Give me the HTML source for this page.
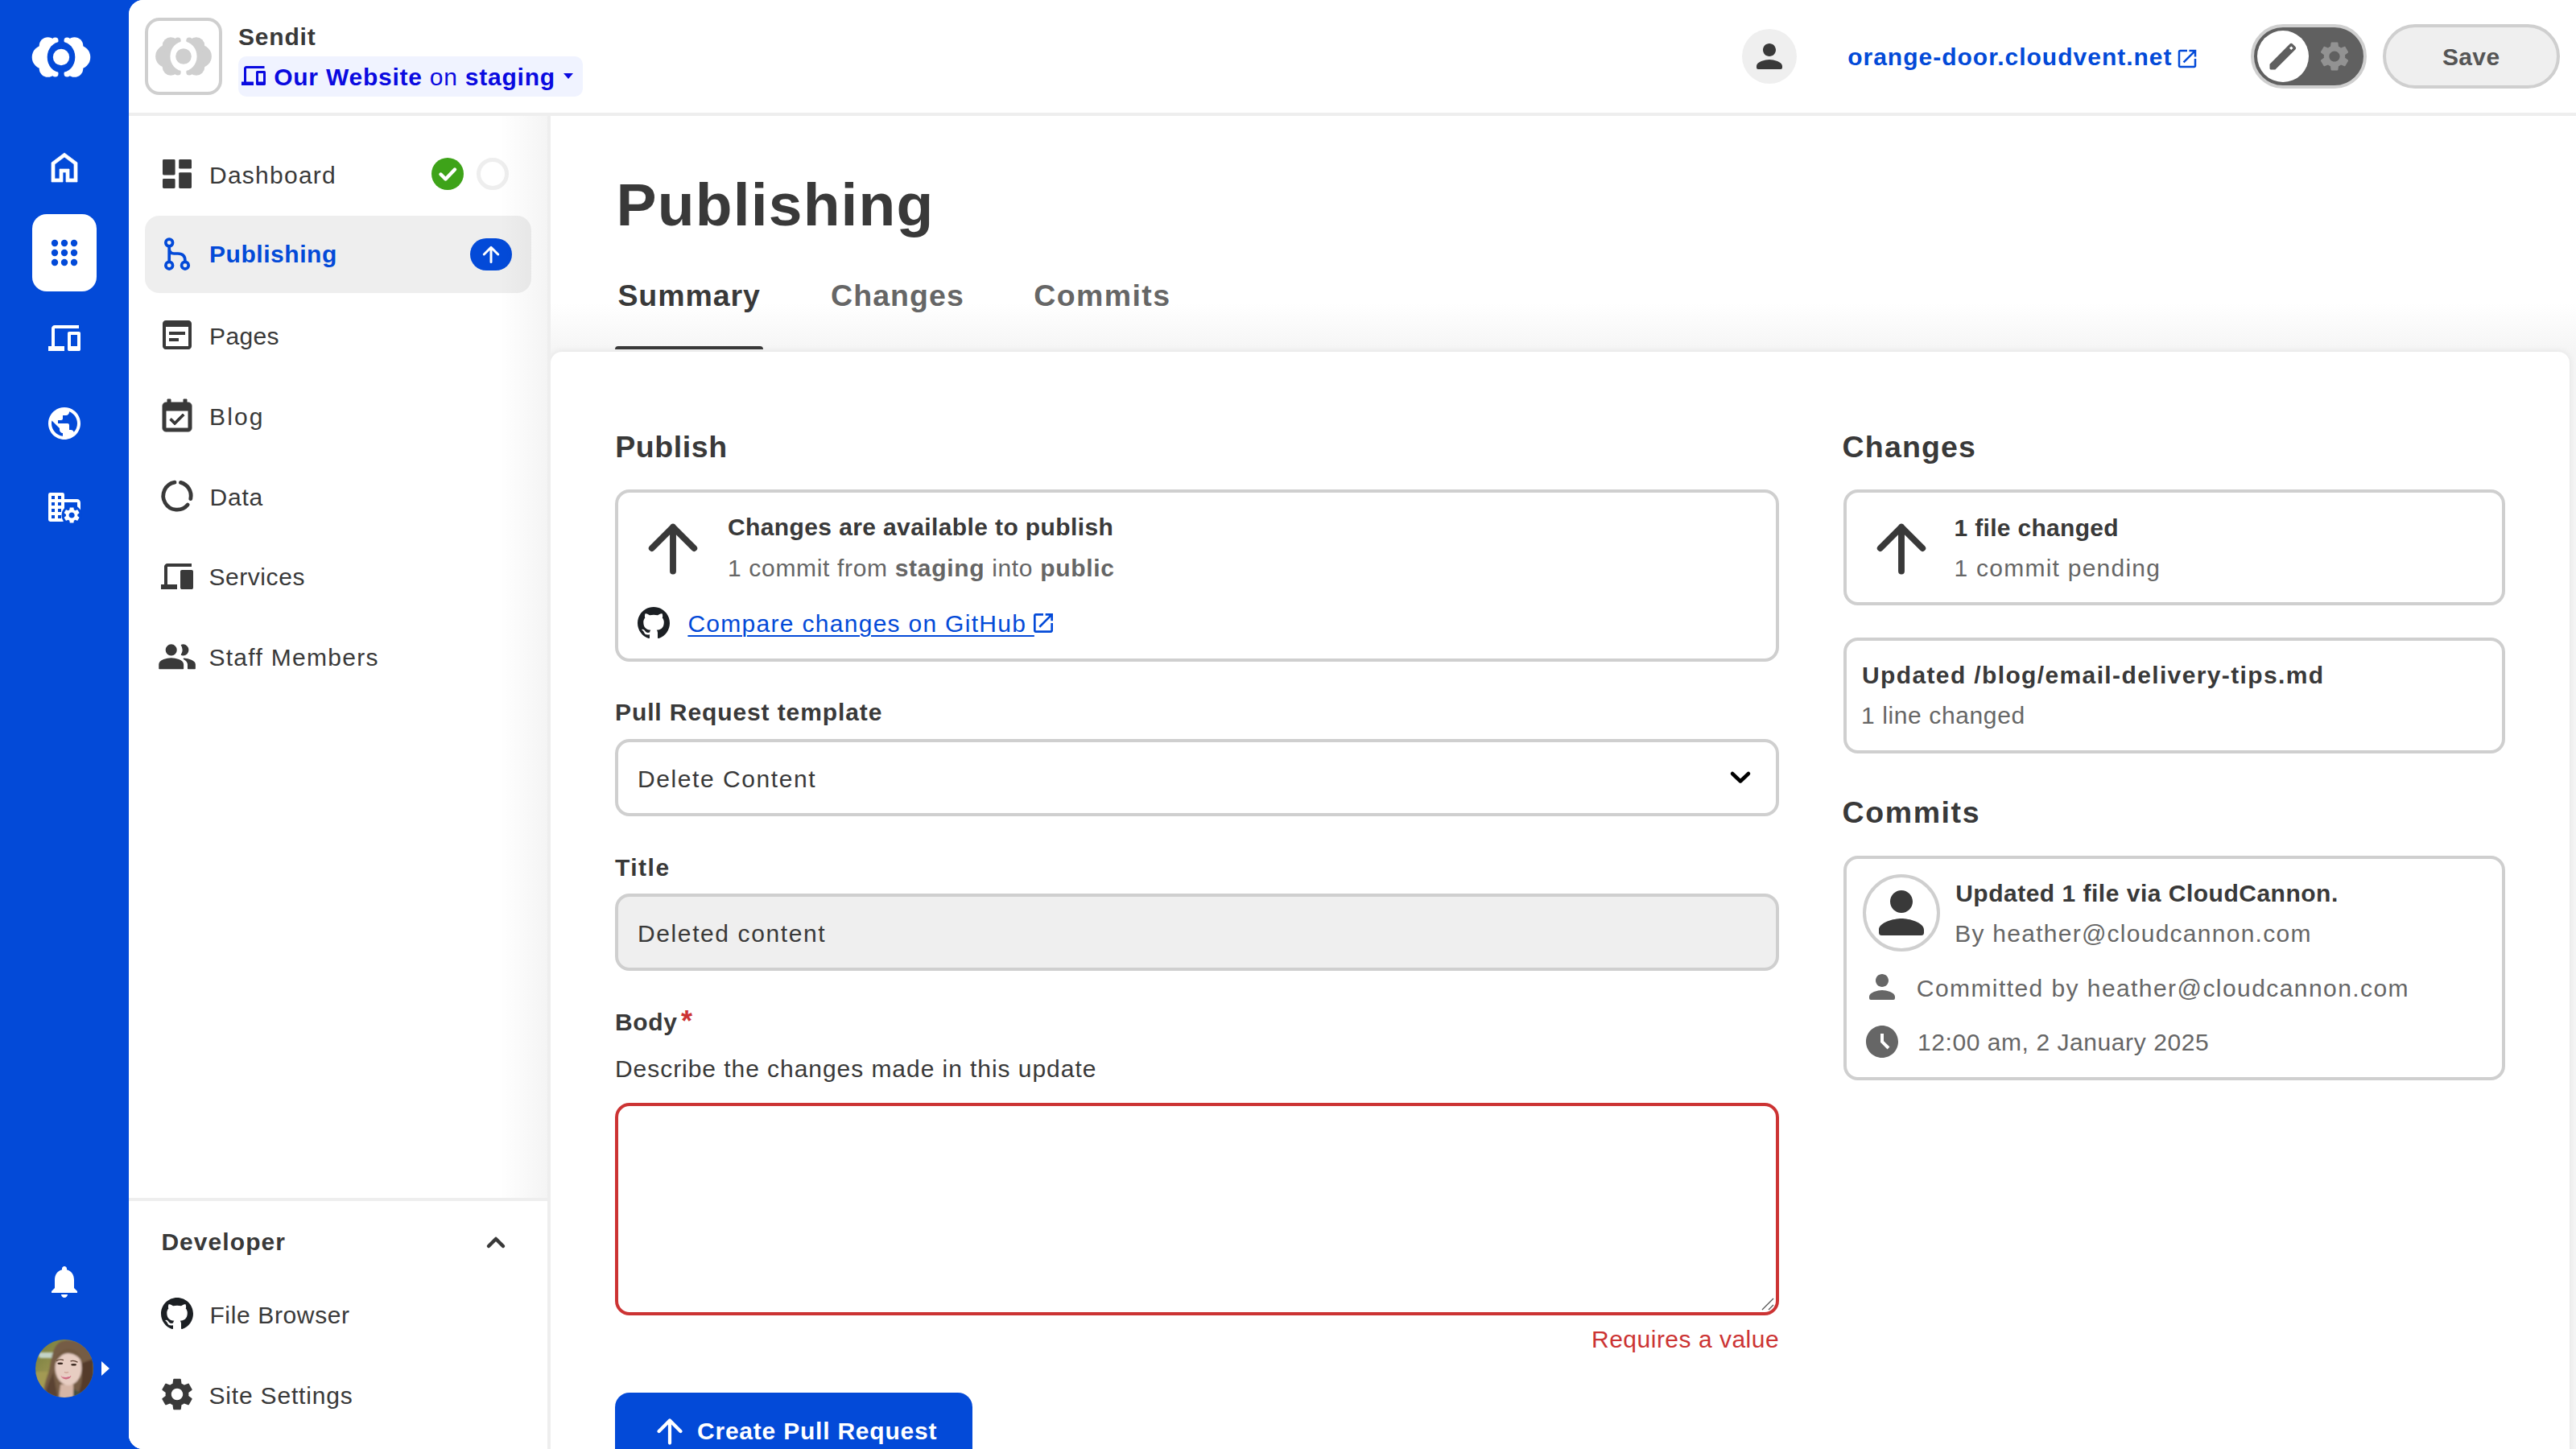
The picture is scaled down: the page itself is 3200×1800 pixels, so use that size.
<!DOCTYPE html>
<html lang="en">
<head>
<meta charset="utf-8">
<title>Publishing - Sendit - CloudCannon</title>
<style>
*{box-sizing:border-box;margin:0;padding:0}
html,body{width:3200px;height:1800px;overflow:hidden}
body{background:#034ad8;font-family:"Liberation Sans",sans-serif;color:#393939;position:relative;font-size:30px}
.abs{position:absolute}
.t{position:absolute;white-space:nowrap;line-height:1;display:block}
svg{position:absolute;display:block;overflow:visible}
#rail{position:absolute;left:0;top:0;width:160px;height:1800px;background:#034ad8}
#main{position:absolute;left:160px;top:0;width:3040px;height:1800px;background:#fff;border-radius:18px 0 0 18px;overflow:hidden}
#hdr{position:absolute;left:0;top:0;width:3040px;height:144px;border-bottom:4px solid #eee;background:#fff}
#nav{position:absolute;left:0;top:144px;width:524px;height:1656px;background:#fff;border-right:4px solid #eee}
#navshade{position:absolute;left:620px;top:144px;width:60px;height:1344px;pointer-events:none;background:linear-gradient(90deg,rgba(0,0,0,0),rgba(0,0,0,.045))}
#dev{position:absolute;left:0;top:1344px;width:520px;height:312px;background:#fff;border-top:4px solid #eee}
#content{position:absolute;left:524px;top:144px;width:2516px;height:1656px;background:linear-gradient(180deg,#fff 0,#fff 232px,#f5f5f5 293px)}
#card{position:absolute;left:0;top:293px;width:2508px;height:1400px;background:#fff;border-radius:14px 14px 0 0;box-shadow:0 0 10px rgba(0,0,0,.09)}
.box{position:absolute;border:4px solid #cfcfcf;border-radius:18px;background:#fff}
</style>
</head>
<body>
<div id="rail"></div>
<div id="main">
  <div id="content"><div id="card"></div></div>
  <div id="nav"><div id="dev"></div></div>
  <div id="hdr"></div>
</div>

<nav id="railitems" class="abs" style="left:0;top:0">
<svg style="left:76px;top:71px" width="1" height="1" fill="#fff"><g>
<mask id="m1" maskUnits="userSpaceOnUse" x="-40" y="-30" width="80" height="60">
<rect x="-40" y="-30" width="80" height="60" fill="#fff"/>
<ellipse cx="0" cy="0" rx="17.300" ry="19.300" fill="#000"/>
<rect x="-3.200" y="-30" width="6.400" height="60" fill="#000"/>
</mask>
<g mask="url(#m1)">
<circle cx="-21.5" cy="0" r="14.8"/><circle cx="21.5" cy="0" r="14.8"/>
<circle cx="-16.5" cy="-14" r="10.8"/><circle cx="16.5" cy="-14" r="10.8"/>
<circle cx="-16.5" cy="14" r="10.8"/><circle cx="16.5" cy="14" r="10.8"/>
<circle cx="-7.4" cy="-20.600" r="4"/><circle cx="7.4" cy="-20.600" r="4"/>
<circle cx="-7.4" cy="20.600" r="4"/><circle cx="7.4" cy="20.600" r="4"/>
<circle cx="-10" cy="-12" r="9"/><circle cx="10" cy="-12" r="9"/><circle cx="-10" cy="12" r="9"/><circle cx="10" cy="12" r="9"/>
</g>
<circle cx="0" cy="0" r="10.2"/>
</g></svg>
<svg style="left:56px;top:184px" width="48" height="48" viewBox="0 0 24 24" fill="#fff" ><path d="M6 19h3v-6h6v6h3v-9l-6-4.5L6 10Zm-2 2V9l8-6 8 6v12h-7v-6h-2v6Z" stroke="#fff" stroke-width=".35" stroke-linejoin="round"/></svg>
<div class="abs" style="left:40px;top:266px;width:80px;height:96px;background:#fff;border-radius:18px"></div>
<svg style="left:56px;top:290px" width="48" height="48" viewBox="0 0 24 24" fill="#034ad8" ><circle cx="6" cy="6" r="2.1"/><circle cx="12" cy="6" r="2.1"/><circle cx="18" cy="6" r="2.1"/><circle cx="6" cy="12" r="2.1"/><circle cx="12" cy="12" r="2.1"/><circle cx="18" cy="12" r="2.1"/><circle cx="6" cy="18" r="2.1"/><circle cx="12" cy="18" r="2.1"/><circle cx="18" cy="18" r="2.1"/></svg>
<svg style="left:56px;top:396px" width="48" height="48" viewBox="0 0 24 24" fill="#fff" ><path d="M2 20v-3h2V6q0-.825.588-1.412Q5.175 4 6 4h15v2H6v11h6v3Zm13 0q-.425 0-.712-.288Q14 19.425 14 19V9q0-.425.288-.713Q14.575 8 15 8h6q.425 0 .713.287Q22 8.575 22 9v10q0 .425-.287.712Q21.425 20 21 20Zm1-3h4v-7h-4Z"/></svg>
<svg style="left:56px;top:502px" width="48" height="48" viewBox="0 0 24 24" fill="#fff" ><path d="M12 2C6.48 2 2 6.48 2 12s4.48 10 10 10 10-4.48 10-10S17.52 2 12 2zm-1 17.93c-3.95-.49-7-3.85-7-7.93 0-.62.08-1.21.21-1.79L9 15v1c0 1.1.9 2 2 2v1.930zm6.9-2.54c-.26-.81-1-1.39-1.9-1.39h-1v-3c0-.55-.45-1-1-1H8v-2h2c.55 0 1-.45 1-1V7h2c1.1 0 2-.9 2-2v-.41c2.93 1.19 5 4.06 5 7.41 0 2.08-.8 3.97-2.1 5.39z"/></svg>
<svg style="left:56px;top:606px" width="48" height="48" viewBox="0 0 24 24" fill="#fff" ><path fill-rule="evenodd" d="M3.200 3h7.600a1.200 1.200 0 0 1 1.200 1.200v15.600a1.200 1.200 0 0 1-1.200 1.200H3.200a1.200 1.200 0 0 1-1.200-1.200V4.200A1.200 1.200 0 0 1 3.200 3zM4 5h2v2H4zM8 5h2v2H8zM4 9h2v2H4zM8 9h2v2H8zM4 13h2v2H4zM8 13h2v2H8zM4 17h2v2H4zM8 17h2v2H8z"/><path d="M12 7h7.800a2.200 2.200 0 0 1 2.200 2.200V14h-2V9h-8z"/><circle cx="16.550" cy="17" r="6.300" fill="#034ad8"/><path transform="translate(10.550 11) scale(0.5)" d="M19.14 12.94c.04-.3.06-.61.06-.94 0-.32-.02-.64-.07-.94l2.03-1.58c.18-.14.23-.41.12-.61l-1.92-3.32c-.12-.22-.37-.29-.59-.22l-2.39.96c-.5-.38-1.03-.7-1.62-.94l-.36-2.54c-.04-.24-.24-.41-.48-.41h-3.84c-.24 0-.43.17-.47.41l-.36 2.54c-.59.24-1.13.57-1.62.94l-2.39-.96c-.22-.08-.47 0-.59.22L2.74 8.870c-.12.21-.08.47.12.61l2.03 1.58c-.05.3-.09.63-.09.94s.02.64.07.94l-2.03 1.58c-.18.14-.23.41-.12.61l1.920 3.320c.12.22.37.29.59.22l2.39-.96c.5.38 1.03.7 1.62.94l.36 2.54c.05.24.24.41.48.41h3.84c.24 0 .44-.17.47-.41l.36-2.54c.59-.24 1.13-.56 1.62-.94l2.39.96c.22.08.47 0 .59-.22l1.92-3.32c.12-.22.07-.47-.12-.61l-2.010-1.58zM12 15.600c-1.98 0-3.600-1.62-3.600-3.600s1.62-3.600 3.600-3.600 3.600 1.62 3.600 3.600-1.62 3.600-3.600 3.600z"/></svg>
<svg style="left:56px;top:1568px" width="48" height="48" viewBox="0 0 24 24" fill="#fff" ><path d="M12 22c1.1 0 2-.9 2-2h-4c0 1.1.89 2 2 2zm6-6v-5c0-3.07-1.64-5.64-4.5-6.32V4c0-.83-.67-1.5-1.5-1.5s-1.5.67-1.5 1.5v.68C7.63 5.36 6 7.92 6 11v5l-2 2v1h16v-1l-2-2z"/></svg>
<svg id="avatar" style="left:44px;top:1664px" width="72" height="72" viewBox="0 0 72 72">
<defs><clipPath id="avc"><circle cx="36" cy="36" r="36"/></clipPath>
<linearGradient id="avbg" x1="0" y1="0" x2="1" y2="1"><stop offset="0" stop-color="#6f7a3c"/><stop offset=".45" stop-color="#9c9552"/><stop offset="1" stop-color="#8a7a48"/></linearGradient>
<filter id="avb" x="-10%" y="-10%" width="120%" height="120%"><feGaussianBlur stdDeviation="1.1"/></filter>
<filter id="avb2" x="-10%" y="-10%" width="120%" height="120%"><feGaussianBlur stdDeviation=".6"/></filter></defs>
<g clip-path="url(#avc)">
<rect width="72" height="72" fill="url(#avbg)"/>
<g filter="url(#avb)">
<rect x="4" y="16" width="22" height="7" rx="3" fill="#c3d3c6"/>
<rect x="0" y="40" width="16" height="32" fill="#a39a52"/>
<path d="M38 1C22 2 21 20 18 34 15 48 9 56 10 74h62V20C66 6 54 0 38 1z" fill="#755c45"/>
<path d="M56 30c4 12 2 30-6 44h22V24z" fill="#553b2b"/>
<path d="M22 40c-3 10-9 18-10 34h16c-2-10-4-22-6-34z" fill="#5a4230"/>
<path d="M48 62l8 4 6 8H44z" fill="#46503f"/>
<path d="M31 56h16v18H29z" fill="#d6b6a6"/>
<ellipse cx="41" cy="35" rx="16.500" ry="22" fill="#e7cdc2"/>
<path d="M23.500 34C25 19 32 11.500 41 11.500c9.500 0 16 6 18.500 19-4-8-10-13-18.500-13.500-8 0-14 6-17.500 17z" fill="#715841"/>
</g>
<g filter="url(#avb2)">
<ellipse cx="30.800" cy="29.800" rx="3.400" ry="1.300" fill="#3b2a22"/><ellipse cx="47.600" cy="31.300" rx="3.400" ry="1.300" fill="#3b2a22"/>
<path d="M26 26.500q4.500-2.600 9-.8M43.500 26.800q4.500-1.500 9 1.500" stroke="#5b3f30" stroke-width="1.300" fill="none"/>
<path d="M36 40.500q2.500 1.200 5 0" stroke="#c79a8c" stroke-width="1.200" fill="none"/>
<path d="M31.500 45.300q6.500 1.800 13-.3-1.500 4.200-6.500 4.400Q33.500 49.200 31.500 45.300z" fill="#cf6f84"/>
<path d="M32.500 45.800q5.500 1.300 10.500-.6" stroke="#f1dcd6" stroke-width="1" fill="none"/>
</g></g></svg>
<svg style="left:126px;top:1691px" width="10" height="18" viewBox="0 0 10 18" fill="#fff"><path d="M0 0l10 9L0 18z"/></svg>
</nav>

<header id="hdritems" class="abs" style="left:0;top:0">
<div class="abs" style="left:180px;top:22px;width:96px;height:96px;border:4px solid #cfcfcf;border-radius:18px;background:#fff"></div>
<svg style="left:228px;top:70px" width="1" height="1" fill="#cfcfcf"><g transform="scale(.96)"><g>
<mask id="m2" maskUnits="userSpaceOnUse" x="-40" y="-30" width="80" height="60">
<rect x="-40" y="-30" width="80" height="60" fill="#fff"/>
<ellipse cx="0" cy="0" rx="17.300" ry="19.300" fill="#000"/>
<rect x="-3.200" y="-30" width="6.400" height="60" fill="#000"/>
</mask>
<g mask="url(#m2)">
<circle cx="-21.5" cy="0" r="14.8"/><circle cx="21.5" cy="0" r="14.8"/>
<circle cx="-16.5" cy="-14" r="10.8"/><circle cx="16.5" cy="-14" r="10.8"/>
<circle cx="-16.5" cy="14" r="10.8"/><circle cx="16.5" cy="14" r="10.8"/>
<circle cx="-7.4" cy="-20.600" r="4"/><circle cx="7.4" cy="-20.600" r="4"/>
<circle cx="-7.4" cy="20.600" r="4"/><circle cx="7.4" cy="20.600" r="4"/>
<circle cx="-10" cy="-12" r="9"/><circle cx="10" cy="-12" r="9"/><circle cx="-10" cy="12" r="9"/><circle cx="10" cy="12" r="9"/>
</g>
<circle cx="0" cy="0" r="10.2"/>
</g></g></svg>
<div id="t_sendit" class="t" style="left:296.00px;top:31.40px;font-size:30px;letter-spacing:0.800px;color:#393939;font-weight:bold">Sendit</div>
<div class="abs" style="left:296px;top:70px;width:428px;height:50px;border-radius:10px;background:#f0f3ff"></div>
<svg style="left:297px;top:76px" width="36" height="36" viewBox="0 0 24 24" fill="#0a0ae0" ><path d="M2 20v-3h2V6q0-.825.588-1.412Q5.175 4 6 4h15v2H6v11h6v3Zm13 0q-.425 0-.712-.288Q14 19.425 14 19V9q0-.425.288-.713Q14.575 8 15 8h6q.425 0 .713.287Q22 8.575 22 9v10q0 .425-.287.712Q21.425 20 21 20Zm1-3h4v-7h-4Z"/></svg>
<div id="t_site" class="t" style="left:340.20px;top:81.00px;font-size:30px;letter-spacing:0.762px;color:#0a0ae0;font-weight:normal"><b>Our Website</b> on <b>staging</b></div>
<svg style="left:700px;top:91px" width="12" height="7" viewBox="0 0 12 7" fill="#0a0ae0"><path d="M0 0h12L6 7z"/></svg>
<div class="abs" style="left:2164px;top:36px;width:68px;height:68px;border-radius:50%;background:#efefef"></div>
<svg style="left:2174px;top:46px" width="48" height="48" viewBox="0 0 24 24" fill="#393939" ><path d="M12 12c2.21 0 4-1.79 4-4s-1.79-4-4-4-4 1.79-4 4 1.79 4 4 4zm0 2c-2.67 0-8 1.340-8 4v1q0 1 1 1h14q1 0 1-1v-1c0-2.660-5.330-4-8-4z"/></svg>
<a id="t_url" class="t" style="left:2295.20px;top:55.60px;font-size:30px;letter-spacing:1.000px;color:#034ad8;font-weight:bold">orange-door.cloudvent.net</a>
<svg style="left:2702px;top:58px" width="30" height="30" viewBox="0 0 24 24" fill="#034ad8" ><path d="M19 19H5V5h7V3H5c-1.11 0-2 .9-2 2v14c0 1.1.89 2 2 2h14c1.100 0 2-.9 2-2v-7h-2v7zM14 3v2h3.590l-9.830 9.830 1.410 1.410L19 6.410V10h2V3h-7z"/></svg>
<div class="abs" style="left:2796px;top:30px;width:144px;height:80px;border-radius:40px;border:4px solid #cfcfcf;background:#606060"></div>
<div class="abs" style="left:2804px;top:38px;width:64px;height:64px;border-radius:50%;background:#fff"></div>
<svg style="left:2814px;top:48px" width="44" height="44" viewBox="0 0 24 24" fill="#5f5f5f" ><path fill-rule="evenodd" d="M3 17.250V20.200q0 .8.800.8h2.950L20.400 7.350a1.300 1.300 0 0 0 0-1.840L18.490 3.600a1.300 1.300 0 0 0-1.840 0ZM17.600 5.150l1.250 1.250-1.250 1.250-1.250-1.250z"/></svg>
<svg style="left:2878px;top:48px" width="44" height="44" viewBox="0 0 24 24" fill="#929292" ><path d="M19.14 12.94c.04-.3.06-.61.06-.94 0-.32-.02-.64-.07-.94l2.03-1.58c.18-.14.23-.41.12-.61l-1.92-3.32c-.12-.22-.37-.29-.59-.22l-2.39.96c-.5-.38-1.03-.7-1.62-.94l-.36-2.54c-.04-.24-.24-.41-.48-.41h-3.84c-.24 0-.43.17-.47.41l-.36 2.54c-.59.24-1.13.57-1.62.94l-2.39-.96c-.22-.08-.47 0-.59.22L2.74 8.870c-.12.21-.08.47.12.61l2.03 1.58c-.05.3-.09.63-.09.94s.02.64.07.94l-2.03 1.58c-.18.14-.23.41-.12.61l1.920 3.320c.12.22.37.29.59.22l2.39-.96c.5.38 1.03.7 1.62.94l.36 2.54c.05.24.24.41.48.41h3.84c.24 0 .44-.17.47-.41l.36-2.54c.59-.24 1.13-.56 1.62-.94l2.39.96c.22.08.47 0 .59-.22l1.92-3.32c.12-.22.07-.47-.12-.61l-2.010-1.58zM12 15.600c-1.98 0-3.600-1.62-3.600-3.600s1.62-3.600 3.600-3.600 3.600 1.62 3.600 3.600-1.62 3.600-3.600 3.600z"/></svg>
<div class="abs" style="left:2960px;top:30px;width:220px;height:80px;border-radius:40px;border:4px solid #cfcfcf;background:#efefef"></div>
<span id="t_save" class="t" style="left:3034.00px;top:55.60px;font-size:30px;letter-spacing:0.333px;color:#555;font-weight:bold">Save</span>
</header>

<nav id="navitems" class="abs" style="left:0;top:0">
<svg style="left:196px;top:192px" width="48" height="48" viewBox="0 0 24 24" fill="#393939" ><rect x="3" y="3" width="7.800" height="9.700" rx=".7"/><rect x="3" y="15" width="7.800" height="6" rx=".7"/><rect x="13.100" y="3" width="7.900" height="5.800" rx=".7"/><rect x="13.100" y="11.100" width="7.900" height="9.900" rx=".7"/></svg><div id="t_n_dash" class="t" style="left:260.00px;top:202.60px;font-size:30px;letter-spacing:1.250px;color:#393939;font-weight:normal">Dashboard</div>
<svg style="left:536px;top:196px" width="40" height="40" viewBox="0 0 40 40"><circle cx="20" cy="20" r="20" fill="#3ea319"/><path d="M11.500 20.500l6 6L29 14.500" fill="none" stroke="#fff" stroke-width="4.400" stroke-linecap="round" stroke-linejoin="round"/></svg>
<div class="abs" style="left:592px;top:196px;width:40px;height:40px;border-radius:50%;border:5px solid #eee;background:#fff"></div>
<div class="abs" style="left:180px;top:268px;width:480px;height:96px;border-radius:18px;background:#eee"></div>
<svg style="left:196px;top:292px" width="48" height="48" viewBox="0 0 24 24" fill="none" stroke="#034ad8" stroke-width="1.850" stroke-linecap="round"><circle cx="7.100" cy="4.750" r="2.170"/><circle cx="7.100" cy="18.850" r="2.170"/><circle cx="16.950" cy="18.850" r="2.170"/><path d="M7.100 7v9.600M7.100 8.500q0 3 3 3h2.400q4.450 0 4.450 4.450v.65"/></svg>
<div id="t_n_pub" class="t" style="left:260.00px;top:301.00px;font-size:30px;letter-spacing:0.556px;color:#034ad8;font-weight:bold">Publishing</div>
<div class="abs" style="left:584px;top:296px;width:52px;height:40px;border-radius:20px;background:#034ad8"></div>
<svg style="left:595px;top:301px" width="30" height="30" viewBox="0 0 24 24" fill="none" stroke="#fff" stroke-width="2.4" stroke-linecap="round" stroke-linejoin="round"><path d="M12 19.600V5M5 12l7-7 7 7"/></svg>
<svg style="left:196px;top:392px" width="48" height="48" viewBox="0 0 24 24" fill="#393939" ><path d="M19 3H5c-1.110 0-2 .9-2 2v14c0 1.100.890 2 2 2h14c1.100 0 2-.9 2-2V5c0-1.100-.890-2-2-2zm0 16H5V7h14v12zm-2-7H7v-2h10v2zm-4 4H7v-2h6v2z"/></svg><div id="t_n_pages" class="t" style="left:260.00px;top:402.60px;font-size:30px;letter-spacing:0.375px;color:#393939;font-weight:normal">Pages</div>
<svg style="left:196px;top:494px" width="48" height="48" viewBox="0 0 24 24" fill="#393939" ><path stroke="#393939" stroke-width=".5" stroke-linejoin="round" d="M16.53 11.060L15.470 10l-4.880 4.880-2.120-2.120-1.060 1.060L10.590 17l5.940-5.940zM19 3h-1V1h-2v2H8V1H6v2H5c-1.110 0-1.990.9-1.990 2L3 19c0 1.100.890 2 2 2h14c1.100 0 2-.9 2-2V5c0-1.100-.9-2-2-2zm0 16H5V8h14v11z"/></svg><div id="t_n_blog" class="t" style="left:260.00px;top:502.60px;font-size:30px;letter-spacing:2.167px;color:#393939;font-weight:normal">Blog</div>
<svg style="left:196px;top:592px" width="48" height="48" viewBox="0 0 24 24" fill="#393939" ><path d="M10.510 3.530A8.600 8.600 0 1 0 18.590 17.530M14.230 3.690A8.600 8.600 0 0 1 20.410 13.790" fill="none" stroke="#393939" stroke-width="2.400" stroke-linecap="round"/></svg><div id="t_n_data" class="t" style="left:260.40px;top:602.60px;font-size:30px;letter-spacing:0.833px;color:#393939;font-weight:normal">Data</div>
<svg style="left:196px;top:692px" width="48" height="48" viewBox="0 0 24 24" fill="#393939" ><path d="M2 20v-3h2V6q0-.825.588-1.412Q5.175 4 6 4h15v2H6v11h6v3Zm13 0q-.425 0-.712-.288Q14 19.425 14 19V9q0-.425.288-.713Q14.575 8 15 8h6q.425 0 .713.287Q22 8.575 22 9v10q0 .425-.287.712Q21.425 20 21 20Z"/></svg><div id="t_n_serv" class="t" style="left:259.40px;top:702.40px;font-size:30px;letter-spacing:0.571px;color:#393939;font-weight:normal">Services</div>
<svg style="left:196px;top:792px" width="48" height="48" viewBox="0 0 24 24" fill="#393939" ><path d="M16 11c1.660 0 2.990-1.340 2.990-3S17.660 5 16 5c-.32 0-.63.05-.91.14.57.81.9 1.790.9 2.860s-.34 2.040-.9 2.860c.28.090.59.140.91.140zM9 11c1.660 0 3-1.340 3-3s-1.340-3-3-3-3 1.340-3 3 1.340 3 3 3zm0 2c-2.330 0-7 1.170-7 3.500V19h14v-2.500c0-2.330-4.670-3.500-7-3.500zm7.500.2c1.500.9 2.500 2.050 2.500 3.300V19h4v-2.500c0-1.920-3.600-3.050-6.500-3.300z" transform="translate(-1.100 -.700) scale(1.050)" stroke="#393939" stroke-width=".7" stroke-linejoin="round"/></svg><div id="t_n_staff" class="t" style="left:259.40px;top:802.40px;font-size:30px;letter-spacing:1.292px;color:#393939;font-weight:normal">Staff Members</div>
<div id="t_n_dev" class="t" style="left:200.40px;top:1528.40px;font-size:30px;letter-spacing:1.062px;color:#393939;font-weight:bold">Developer</div>
<svg style="left:604px;top:1535px" width="24" height="16" viewBox="0 0 24 16" fill="none" stroke="#393939" stroke-width="4.500" stroke-linecap="round" stroke-linejoin="round"><path d="M3 13l9-9 9 9"/></svg>
<svg style="left:200px;top:1612px" width="40" height="40" viewBox="0 0 16 16" fill="#1b1f23" ><path d="M8 0C3.58 0 0 3.58 0 8c0 3.54 2.29 6.53 5.47 7.59.4.07.55-.17.55-.38 0-.19-.01-.82-.01-1.49-2.01.37-2.53-.49-2.69-.94-.09-.23-.48-.94-.82-1.13-.28-.15-.68-.52-.01-.53.63-.01 1.08.58 1.23.82.72 1.210 1.870.870 2.330.660.070-.520.280-.870.510-1.070-1.780-.200-3.640-.890-3.640-3.950 0-.870.310-1.590.820-2.150-.080-.200-.360-1.020.080-2.120 0 0 .670-.210 2.200.820.640-.180 1.320-.270 2-.270.680 0 1.360.090 2 .270 1.530-1.040 2.200-.820 2.200-.820.440 1.100.160 1.920.080 2.120.510.560.820 1.270.820 2.150 0 3.070-1.870 3.750-3.650 3.950.290.250.540.730.540 1.480 0 1.070-.010 1.930-.010 2.200 0 .210.150.460.550.380A8.013 8.013 0 0016 8c0-4.420-3.580-8-8-8z"/></svg>
<div id="t_n_file" class="t" style="left:260.40px;top:1618.50px;font-size:30px;letter-spacing:0.636px;color:#393939;font-weight:normal">File Browser</div>
<svg style="left:196px;top:1708px" width="48" height="48" viewBox="0 0 24 24" fill="#393939" ><path d="M19.14 12.94c.04-.3.06-.61.06-.94 0-.32-.02-.64-.07-.94l2.03-1.58c.18-.14.23-.41.12-.61l-1.92-3.32c-.12-.22-.37-.29-.59-.22l-2.39.96c-.5-.38-1.03-.7-1.62-.94l-.36-2.54c-.04-.24-.24-.41-.48-.41h-3.84c-.24 0-.43.17-.47.41l-.36 2.54c-.59.24-1.13.57-1.62.94l-2.39-.96c-.22-.08-.47 0-.59.22L2.74 8.870c-.12.21-.08.47.12.61l2.03 1.58c-.05.3-.09.63-.09.94s.02.64.07.94l-2.03 1.58c-.18.14-.23.41-.12.61l1.920 3.320c.12.22.37.29.59.22l2.39-.96c.5.38 1.03.7 1.62.94l.36 2.54c.05.24.24.41.48.41h3.84c.24 0 .44-.17.47-.41l.36-2.54c.59-.24 1.13-.56 1.62-.94l2.39.96c.22.08.47 0 .59-.22l1.92-3.32c.12-.22.07-.47-.12-.61l-2.010-1.58zM12 15.600c-1.98 0-3.600-1.62-3.600-3.600s1.62-3.600 3.600-3.600 3.600 1.62 3.600 3.600-1.62 3.600-3.600 3.600z"/></svg>
<div id="t_n_sett" class="t" style="left:259.40px;top:1718.82px;font-size:30px;letter-spacing:0.833px;color:#393939;font-weight:normal">Site Settings</div>
</nav>
<div id="navshade"></div>
<main id="mainitems" class="abs" style="left:0;top:0">
<h1 id="t_h1" class="t" style="left:765.60px;top:217.10px;font-size:75px;letter-spacing:1.167px;color:#393939;font-weight:bold">Publishing</h1>
<a id="t_tab1" class="t" style="left:767.40px;top:348.50px;font-size:37.5px;letter-spacing:0.917px;color:#393939;font-weight:bold">Summary</a><a id="t_tab2" class="t" style="left:1032.00px;top:348.50px;font-size:37.5px;letter-spacing:1.083px;color:#666;font-weight:bold">Changes</a><a id="t_tab3" class="t" style="left:1284.20px;top:348.50px;font-size:37.5px;letter-spacing:1.417px;color:#666;font-weight:bold">Commits</a>
<div class="abs" style="left:764px;top:430px;width:184px;height:4px;background:#393939;border-radius:4px 4px 0 0"></div>
<h2 id="t_h_pub" class="t" style="left:764.20px;top:536.50px;font-size:37.5px;letter-spacing:0.583px;color:#393939;font-weight:bold">Publish</h2>
<div class="box" style="left:764px;top:608px;width:1446px;height:214px"></div>
<svg style="left:791px;top:636px" width="90" height="90" viewBox="0 0 24 24" fill="none" stroke="#393939" stroke-width="2.1" stroke-linecap="round" stroke-linejoin="round"><path d="M12 19.600V5M5 12l7-7 7 7"/></svg>
<div id="t_p_t1" class="t" style="left:904.00px;top:640.32px;font-size:30px;letter-spacing:0.387px;color:#393939;font-weight:bold">Changes are available to publish</div><div id="t_p_t2" class="t" style="left:904.00px;top:690.60px;font-size:30px;letter-spacing:0.672px;color:#666;font-weight:normal">1 commit from <b>staging</b> into <b>public</b></div>
<svg style="left:792px;top:754px" width="40" height="40" viewBox="0 0 16 16" fill="#1b1f23" ><path d="M8 0C3.58 0 0 3.58 0 8c0 3.54 2.29 6.53 5.47 7.59.4.07.55-.17.55-.38 0-.19-.01-.82-.01-1.49-2.01.37-2.53-.49-2.69-.94-.09-.23-.48-.94-.82-1.13-.28-.15-.68-.52-.01-.53.63-.01 1.08.58 1.23.82.72 1.210 1.870.870 2.330.660.070-.520.280-.870.510-1.070-1.780-.200-3.640-.890-3.640-3.950 0-.870.310-1.590.820-2.150-.080-.200-.360-1.020.080-2.120 0 0 .670-.210 2.200.820.640-.180 1.320-.270 2-.270.680 0 1.360.090 2 .270 1.530-1.040 2.200-.820 2.200-.820.440 1.100.160 1.920.080 2.120.510.560.820 1.270.820 2.150 0 3.070-1.870 3.750-3.650 3.950.290.250.540.730.540 1.480 0 1.070-.010 1.930-.010 2.200 0 .210.150.460.550.380A8.013 8.013 0 0016 8c0-4.420-3.580-8-8-8z"/></svg>
<a id="t_p_link" class="t" style="left:854.40px;top:760.00px;font-size:30px;letter-spacing:1.291px;color:#034ad8;font-weight:normal;text-decoration:underline;text-decoration-thickness:2px;text-underline-offset:4px">Compare changes on GitHub&nbsp;</a>
<svg style="left:1280px;top:758px" width="32" height="32" viewBox="0 0 24 24" fill="#034ad8" ><path d="M19 19H5V5h7V3H5c-1.11 0-2 .9-2 2v14c0 1.1.89 2 2 2h14c1.100 0 2-.9 2-2v-7h-2v7zM14 3v2h3.590l-9.830 9.830 1.410 1.410L19 6.410V10h2V3h-7z"/></svg>
<label id="t_l_tpl" class="t" style="left:764.00px;top:870.22px;font-size:30px;letter-spacing:0.900px;color:#393939;font-weight:bold">Pull Request template</label>
<div class="box" style="left:764px;top:918px;width:1446px;height:96px"></div>
<div id="t_v_tpl" class="t" style="left:792.00px;top:953.10px;font-size:30px;letter-spacing:1.577px;color:#393939;font-weight:normal">Delete Content</div>
<svg style="left:2148px;top:956px" width="28" height="20" viewBox="0 0 28 20" fill="none" stroke="#000" stroke-width="4.500" stroke-linecap="round" stroke-linejoin="round"><path d="M4 5l10 9.500L24 5"/></svg>
<label id="t_l_title" class="t" style="left:764.00px;top:1063.00px;font-size:30px;letter-spacing:1.500px;color:#393939;font-weight:bold">Title</label>
<div class="box" style="left:764px;top:1110px;width:1446px;height:96px;background:#efefef"></div>
<div id="t_v_title" class="t" style="left:792.00px;top:1145.40px;font-size:30px;letter-spacing:1.607px;color:#393939;font-weight:normal">Deleted content</div>
<label id="t_l_body" class="t" style="left:764.00px;top:1255.00px;font-size:30px;letter-spacing:0.667px;color:#393939;font-weight:bold">Body</label>
<span class="t ast" style="left:846px;top:1251px;font-size:36px;font-weight:bold;color:#cc3333">*</span>
<div id="t_l_desc" class="t" style="left:764.00px;top:1313.00px;font-size:30px;letter-spacing:0.949px;color:#393939;font-weight:normal">Describe the changes made in this update</div>
<div class="box" style="left:764px;top:1370px;width:1446px;height:264px;border-color:#cc3333"></div>
<svg style="left:2188px;top:1612px" width="16" height="16" viewBox="0 0 16 16" stroke="#555" stroke-width="1.300"><path d="M1 15L15 1M9 15l6-6"/></svg>
<div id="t_err" class="t" style="left:1977.00px;top:1649.00px;font-size:30px;letter-spacing:0.500px;color:#cc3333;font-weight:normal">Requires a value</div>
<div class="abs" style="left:764px;top:1730px;width:444px;height:96px;border-radius:18px;background:#034ad8"></div>
<svg style="left:809px;top:1755px" width="46" height="46" viewBox="0 0 24 24" fill="none" stroke="#fff" stroke-width="2.2" stroke-linecap="round" stroke-linejoin="round"><path d="M12 19.600V5M5 12l7-7 7 7"/></svg>
<span id="t_btn" class="t" style="left:866.00px;top:1763.22px;font-size:30px;letter-spacing:0.778px;color:#fff;font-weight:bold">Create Pull Request</span>
<h2 id="t_h_chg" class="t" style="left:2288.60px;top:537.22px;font-size:37.5px;letter-spacing:1.167px;color:#393939;font-weight:bold">Changes</h2>
<div class="box" style="left:2290px;top:608px;width:822px;height:144px"></div>
<svg style="left:2317px;top:635.7px" width="90" height="90" viewBox="0 0 24 24" fill="none" stroke="#393939" stroke-width="2.1" stroke-linecap="round" stroke-linejoin="round"><path d="M12 19.600V5M5 12l7-7 7 7"/></svg>
<div id="t_c_t1" class="t" style="left:2427.60px;top:641.00px;font-size:30px;letter-spacing:0.308px;color:#393939;font-weight:bold">1 file changed</div><div id="t_c_t2" class="t" style="left:2427.60px;top:690.72px;font-size:30px;letter-spacing:1.233px;color:#666;font-weight:normal">1 commit pending</div>
<div class="box" style="left:2290px;top:792px;width:822px;height:144px"></div>
<div id="t_f_t1" class="t" style="left:2313.00px;top:824.22px;font-size:30px;letter-spacing:1.371px;color:#393939;font-weight:bold">Updated /blog/email-delivery-tips.md</div><div id="t_f_t2" class="t" style="left:2312.00px;top:874.40px;font-size:30px;letter-spacing:0.615px;color:#666;font-weight:normal">1 line changed</div>
<h2 id="t_h_com" class="t" style="left:2288.60px;top:990.82px;font-size:37.5px;letter-spacing:1.583px;color:#393939;font-weight:bold">Commits</h2>
<div class="box" style="left:2290px;top:1063px;width:822px;height:279px"></div>
<div class="abs" style="left:2314px;top:1086px;width:96px;height:96px;border-radius:50%;border:4px solid #cfcfcf;background:#fff"></div>
<svg style="left:2320px;top:1092px" width="84" height="84" viewBox="0 0 24 24" fill="#393939" ><path d="M12 12c2.21 0 4-1.79 4-4s-1.79-4-4-4-4 1.79-4 4 1.79 4 4 4zm0 2c-2.67 0-8 1.340-8 4v1q0 1 1 1h14q1 0 1-1v-1c0-2.660-5.330-4-8-4z"/></svg>
<div id="t_m_t1" class="t" style="left:2429.20px;top:1094.90px;font-size:30px;letter-spacing:0.500px;color:#393939;font-weight:bold">Updated 1 file via CloudCannon.</div><div id="t_m_t2" class="t" style="left:2428.20px;top:1144.60px;font-size:30px;letter-spacing:1.260px;color:#666;font-weight:normal">By heather@cloudcannon.com</div>
<svg style="left:2314px;top:1202px" width="48" height="48" viewBox="0 0 24 24" fill="#666" ><path d="M12 12c2.21 0 4-1.79 4-4s-1.79-4-4-4-4 1.79-4 4 1.79 4 4 4zm0 2c-2.67 0-8 1.340-8 4v1q0 1 1 1h14q1 0 1-1v-1c0-2.660-5.330-4-8-4z"/></svg>
<div id="t_m_t3" class="t" style="left:2380.80px;top:1212.90px;font-size:30px;letter-spacing:1.429px;color:#666;font-weight:normal">Committed by heather@cloudcannon.com</div>
<svg style="left:2314px;top:1270px" width="48" height="48" viewBox="0 0 24 24" fill="#666" ><path d="M11.990 2C6.470 2 2 6.480 2 12s4.470 10 9.990 10C17.520 22 22 17.520 22 12S17.520 2 11.990 2zM15.290 16.710L11 12.410V7h2v4.590l3.710 3.710-1.420 1.410z"/></svg>
<div id="t_m_t4" class="t" style="left:2382.00px;top:1280.40px;font-size:30px;letter-spacing:0.565px;color:#666;font-weight:normal">12:00 am, 2 January 2025</div>
</main>

<script>(function(){var w=window.innerWidth;if(w&&Math.abs(w-3200)>2){document.documentElement.style.zoom=w/3200;}})();</script>
</body>
</html>
